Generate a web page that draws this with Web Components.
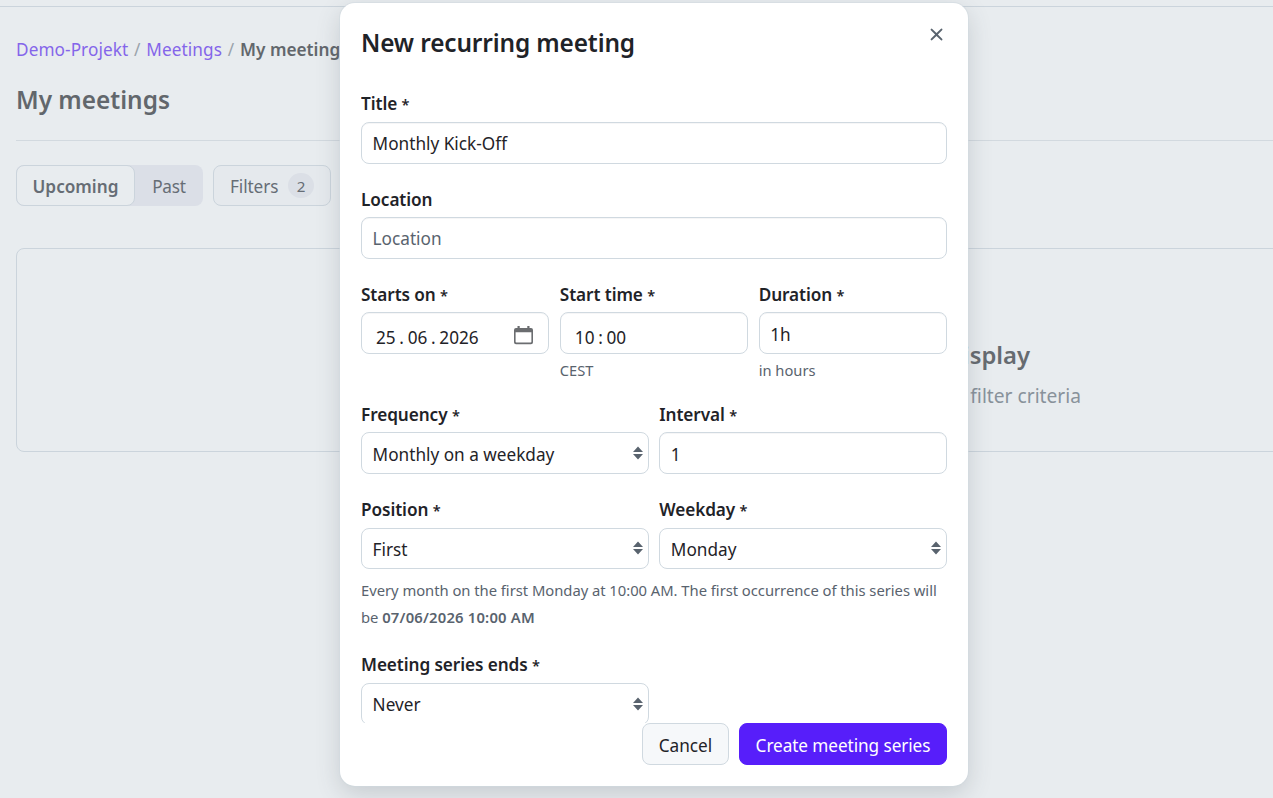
<!DOCTYPE html>
<html lang="en">
<head>
<meta charset="utf-8">
<title>My meetings</title>
<style>
  body {
    margin: 0;
    width: 1273px;
    height: 798px;
    overflow: hidden;
    position: relative;
    background: #e8ecef;
    color: #1f2328;
    font-family: "Noto Sans", "Open Sans", sans-serif;
    font-size: 17.2px;
    line-height: 27px;
    --border: #d0d9e0;
    --muted: #59636e;
    --accent: #571efa;
  }
</style>
</head>
<body>
<meetings-page>
  <crumb-trail slot="crumbs">
    <a>Demo-Projekt</a><a>Meetings</a><b>My meetings</b>
  </crumb-trail>
  <span slot="title">My meetings</span>
  <segmented-control slot="tools"><b>Upcoming</b><span slot="other">Past</span></segmented-control>
  <filter-button slot="tools" count="2">Filters</filter-button>
  <blank-slate><span slot="heading">nothing to display</span>none match the filter criteria</blank-slate>
</meetings-page>

<modal-dialog>
  <span slot="title">New recurring meeting</span>
  <form-field label="Title" required>Monthly Kick-Off</form-field>
  <form-field label="Location" class="placeholder low-label">Location</form-field>
  <form-row>
    <form-field label="Starts on" required kind="date" class="low-label">25<i>.</i>06<i>.</i>2026</form-field>
    <form-field label="Start time" required kind="time" caption="CEST" class="low-label">10<i>:</i>00</form-field>
    <form-field label="Duration" required kind="low" caption="in hours" class="low-label">1h</form-field>
  </form-row>
  <form-row>
    <form-field label="Frequency" required kind="select" class="low-label">Monthly on a weekday</form-field>
    <form-field label="Interval" required kind="low" class="low-label">1</form-field>
  </form-row>
  <form-row>
    <form-field label="Position" required kind="select" class="short">First</form-field>
    <form-field label="Weekday" required kind="select" class="short">Monday</form-field>
  </form-row>
  <help-text>Every month on the first Monday at 10:00 AM. The first occurrence of this series will<br>be <b>07/06/2026 10:00 AM</b></help-text>
  <form-row columns="2">
    <form-field label="Meeting series ends" required kind="select" class="last">Never</form-field>
  </form-row>
  <action-button slot="actions">Cancel</action-button>
  <action-button slot="actions" primary>Create meeting series</action-button>
</modal-dialog>

<script>
class MeetingsPage extends HTMLElement {
  constructor() {
    super();
    this.attachShadow({mode: 'open'}).innerHTML = `
      <style>
        :host { display: block; width: 1300px; padding-top: 6px; }
        .top { border-top: 1px solid #cbd4dc; height: 29px; }
        main { padding-left: 16px; }
        h1 {
          margin: 21px 0 0;
          font-size: 24.4px;
          font-weight: 600;
          line-height: 32px;
          color: #62676c;
        }
        .tools {
          display: flex;
          gap: 10px;
          margin: 24px 0 42px;
          padding-top: 24px;
          border-top: 1px solid #d2d9df;
        }
      </style>
      <div class="top"></div>
      <main>
        <slot name="crumbs"></slot>
        <h1><slot name="title"></slot></h1>
        <div class="tools"><slot name="tools"></slot></div>
        <slot></slot>
      </main>
    `;
  }
}
customElements.define('meetings-page', MeetingsPage);

class CrumbTrail extends HTMLElement {
  constructor() {
    super();
    this.attachShadow({mode: 'open'}).innerHTML = `
      <style>
        :host { display: flex; height: 27px; white-space: nowrap; }
        ::slotted(a) { color: #8465ea; letter-spacing: 0.08px; }
        ::slotted(b) { color: #62676c; font-weight: 600; letter-spacing: 0.03px; }
        .sep { width: 18px; text-align: center; color: #9aa3ab; }
      </style>
    `;
  }

  connectedCallback() {
    Array.from(this.children).forEach((item, index) => {
      if (index > 0) {
        const sep = document.createElement('span');
        sep.className = 'sep';
        sep.textContent = '/';
        this.shadowRoot.appendChild(sep);
      }
      const slot = document.createElement('slot');
      slot.name = 'crumb-' + index;
      item.slot = slot.name;
      this.shadowRoot.appendChild(slot);
    });
  }
}
customElements.define('crumb-trail', CrumbTrail);

class SegmentedControl extends HTMLElement {
  constructor() {
    super();
    this.attachShadow({mode: 'open'}).innerHTML = `
      <style>
        :host {
          display: flex;
          box-sizing: border-box;
          width: 187px;
          height: 41px;
          border-radius: 8px;
          background: #dbdfe7;
          color: #666d75;
          line-height: 41px;
          text-align: center;
        }
        .on {
          box-sizing: border-box;
          width: 119px;
          border: 1px solid #cbd4dc;
          border-radius: 8px;
          background: #e8ecef;
        }
        .off { flex: 1; padding-top: 1px; letter-spacing: -0.2px; }
        ::slotted(b) { font-weight: 600; }
      </style>
      <div class="on"><slot></slot></div>
      <div class="off"><slot name="other"></slot></div>
    `;
  }
}
customElements.define('segmented-control', SegmentedControl);

class FilterButton extends HTMLElement {
  constructor() {
    super();
    this.attachShadow({mode: 'open'}).innerHTML = `
      <style>
        :host {
          display: flex;
          align-items: center;
          box-sizing: border-box;
          width: 118px;
          height: 41px;
          padding: 2px 16px 0;
          border: 1px solid #cbd4dc;
          border-radius: 8px;
          background: #e5e9ed;
          color: #666d75;
          letter-spacing: -0.1px;
        }
        .count {
          width: 26px;
          height: 25px;
          margin: -3px 0 0 10px;
          border-radius: 13px;
          background: #dbdfe6;
          font-size: 15.2px;
          line-height: 26px;
          text-align: center;
        }
      </style>
      <slot></slot><span class="count">${this.getAttribute('count')}</span>
    `;
  }
}
customElements.define('filter-button', FilterButton);

class BlankSlate extends HTMLElement {
  constructor() {
    super();
    this.attachShadow({mode: 'open'}).innerHTML = `
      <style>
        :host {
          display: block;
          box-sizing: border-box;
          height: 204px;
          padding-top: 86px;
          border: 1px solid #cbd4dc;
          border-radius: 8px;
          text-align: right;
          color: #88929b;
          font-size: 19.2px;
        }
        h2 {
          margin: 0 269px 0 0;
          color: #666b70;
          font-size: 23.8px;
          font-weight: 600;
          line-height: 40px;
        }
        p { margin: 7px 218px 0 0; line-height: 28px; }
      </style>
      <h2><slot name="heading"></slot></h2>
      <p><slot></slot></p>
    `;
  }
}
customElements.define('blank-slate', BlankSlate);

class ModalDialog extends HTMLElement {
  constructor() {
    super();
    this.attachShadow({mode: 'open'}).innerHTML = `
      <style>
        :host {
          position: absolute;
          left: 340px;
          top: 3px;
          display: flex;
          flex-direction: column;
          box-sizing: border-box;
          width: 628px;
          height: 783px;
          padding: 0 21px 21px;
          border-radius: 15px;
          background: #fff;
          box-shadow: 0 0 0 1px #d0d9e080, 0 8px 24px rgba(66, 74, 83, 0.2);
        }
        header { display: flex; height: 87px; justify-content: space-between; }
        h1 {
          margin: 23px 0 0;
          font-size: 24.4px;
          font-weight: 600;
          line-height: 34px;
          letter-spacing: -0.13px;
        }
        svg { margin: 21px 0 0; width: 21px; height: 21px; fill: var(--muted); }
        .body { flex: 1; min-height: 0; overflow: hidden; }
        footer { display: flex; justify-content: flex-end; gap: 10px; }
      </style>
      <header>
        <h1><slot name="title"></slot></h1>
        <svg viewBox="0 0 16 16"><path d="M3.72 3.72a.75.75 0 0 1 1.06 0L8 6.94l3.22-3.22a.75.75 0 1 1 1.06 1.06L9.06 8l3.22 3.22a.75.75 0 1 1-1.06 1.06L8 9.06l-3.22 3.22a.75.75 0 0 1-1.06-1.06L6.94 8 3.72 4.78a.75.75 0 0 1 0-1.06Z"/></svg>
      </header>
      <div class="body"><slot></slot></div>
      <footer><slot name="actions"></slot></footer>
    `;
  }
}
customElements.define('modal-dialog', ModalDialog);

class FormRow extends HTMLElement {
  constructor() {
    super();
    this.attachShadow({mode: 'open'}).innerHTML = `
      <style>
        :host {
          display: grid;
          grid-template-columns: repeat(${this.getAttribute('columns') || this.children.length}, 1fr);
          column-gap: 10.5px;
        }
      </style>
      <slot></slot>
    `;
  }
}
customElements.define('form-row', FormRow);

const ARROWS = '<svg class="arrows" viewBox="0 0 10 14"><path d="M5 .5l5 5.500H0zM5 13.500l5-5.500H0z"/></svg>';
const CALENDAR = '<svg class="calendar" viewBox="0 0 19 19"><path fill-rule="evenodd" d="M3.500 0h2.200v2h7.600V0h2.200v2H17a2 2 0 0 1 2 2v12.200a2 2 0 0 1-2 2H2a2 2 0 0 1-2-2V4a2 2 0 0 1 2-2h1.500zM1.600 6.200v9.600a.8.8 0 0 0 .8.8h14.200a.8.8 0 0 0 .8-.8V6.200z"/></svg>';

class FormField extends HTMLElement {
  constructor() {
    super();
    const kind = this.getAttribute('kind');
    const caption = this.getAttribute('caption');
    const star = this.hasAttribute('required') ? ' <span class="star">*</span>' : '';
    this.attachShadow({mode: 'open'}).innerHTML = `
      <style>
        :host { display: block; padding-bottom: 21px; }
        label { display: block; height: 27px; font-weight: 600; letter-spacing: -0.08px; }
        .star { font-size: 14.5px; }
        .box {
          display: flex;
          align-items: center;
          justify-content: space-between;
          box-sizing: border-box;
          height: 42px;
          margin-top: 5px;
          padding: 1px 11px 0 10.6px;
          border: 1px solid var(--border);
          border-radius: 8px;
          background: #fff;
          box-shadow: inset 0 1px 0 rgba(31, 35, 40, 0.04);
        }
        .box.select { padding: 2px 5px 0 10.6px; box-shadow: none; }
        .box.low { padding-top: 2px; }
        .box.date, .box.time { padding: 8px 15px 0 14px; }
        :host(.low-label) { padding-top: 1px; }
        :host(.low-label) .box { margin-top: 4px; }
        :host(.short) { padding-top: 1px; }
        :host(.short) .box { height: 41px; }
        :host(.last) .box { padding-top: 1px; }
        :host(.last) .arrows { margin-top: -2px; }
        :host(.placeholder) .value { color: var(--muted); }
        ::slotted(i) { display: inline-block; width: 12px; text-align: center; font-style: normal; }
        .caption {
          height: 25px;
          padding-top: 4px;
          box-sizing: border-box;
          color: var(--muted);
          font-size: 14.7px;
          line-height: 25px;
        }
        .arrows { width: 10px; height: 14px; margin-top: -3px; fill: var(--muted); }
        .calendar { width: 19px; height: 19px; margin-top: -4px; fill: #6b6d70; }
      </style>
      <label>${this.getAttribute('label')}${star}</label>
      <div class="box ${kind || ''}">
        <span class="value"><slot></slot></span>
        ${kind === 'select' ? ARROWS : ''}${kind === 'date' ? CALENDAR : ''}
      </div>
      ${caption ? `<div class="caption">${caption}</div>` : ''}
    `;
  }
}
customElements.define('form-field', FormField);

class HelpText extends HTMLElement {
  constructor() {
    super();
    this.attachShadow({mode: 'open'}).innerHTML = `
      <style>
        :host {
          display: block;
          margin: -13px 0 20px;
          color: var(--muted);
          font-size: 14.8px;
          line-height: 27px;
          letter-spacing: -0.035px;
          white-space: nowrap;
        }
        ::slotted(b) { font-weight: 600; letter-spacing: 0.2px; }
      </style>
      <slot></slot>
    `;
  }
}
customElements.define('help-text', HelpText);

class ActionButton extends HTMLElement {
  constructor() {
    super();
    this.attachShadow({mode: 'open'}).innerHTML = `
      <style>
        :host {
          box-sizing: border-box;
          width: 87px;
          height: 42px;
          border: 1px solid var(--border);
          border-radius: 8px;
          background: #f6f8fa;
          line-height: 43px;
          text-align: center;
          white-space: nowrap;
        }
        :host([primary]) {
          width: 208px;
          border-color: var(--accent);
          background: var(--accent);
          color: #fff;
          letter-spacing: -0.08px;
        }
      </style>
      <slot></slot>
    `;
  }
}
customElements.define('action-button', ActionButton);
</script>
</body>
</html>
